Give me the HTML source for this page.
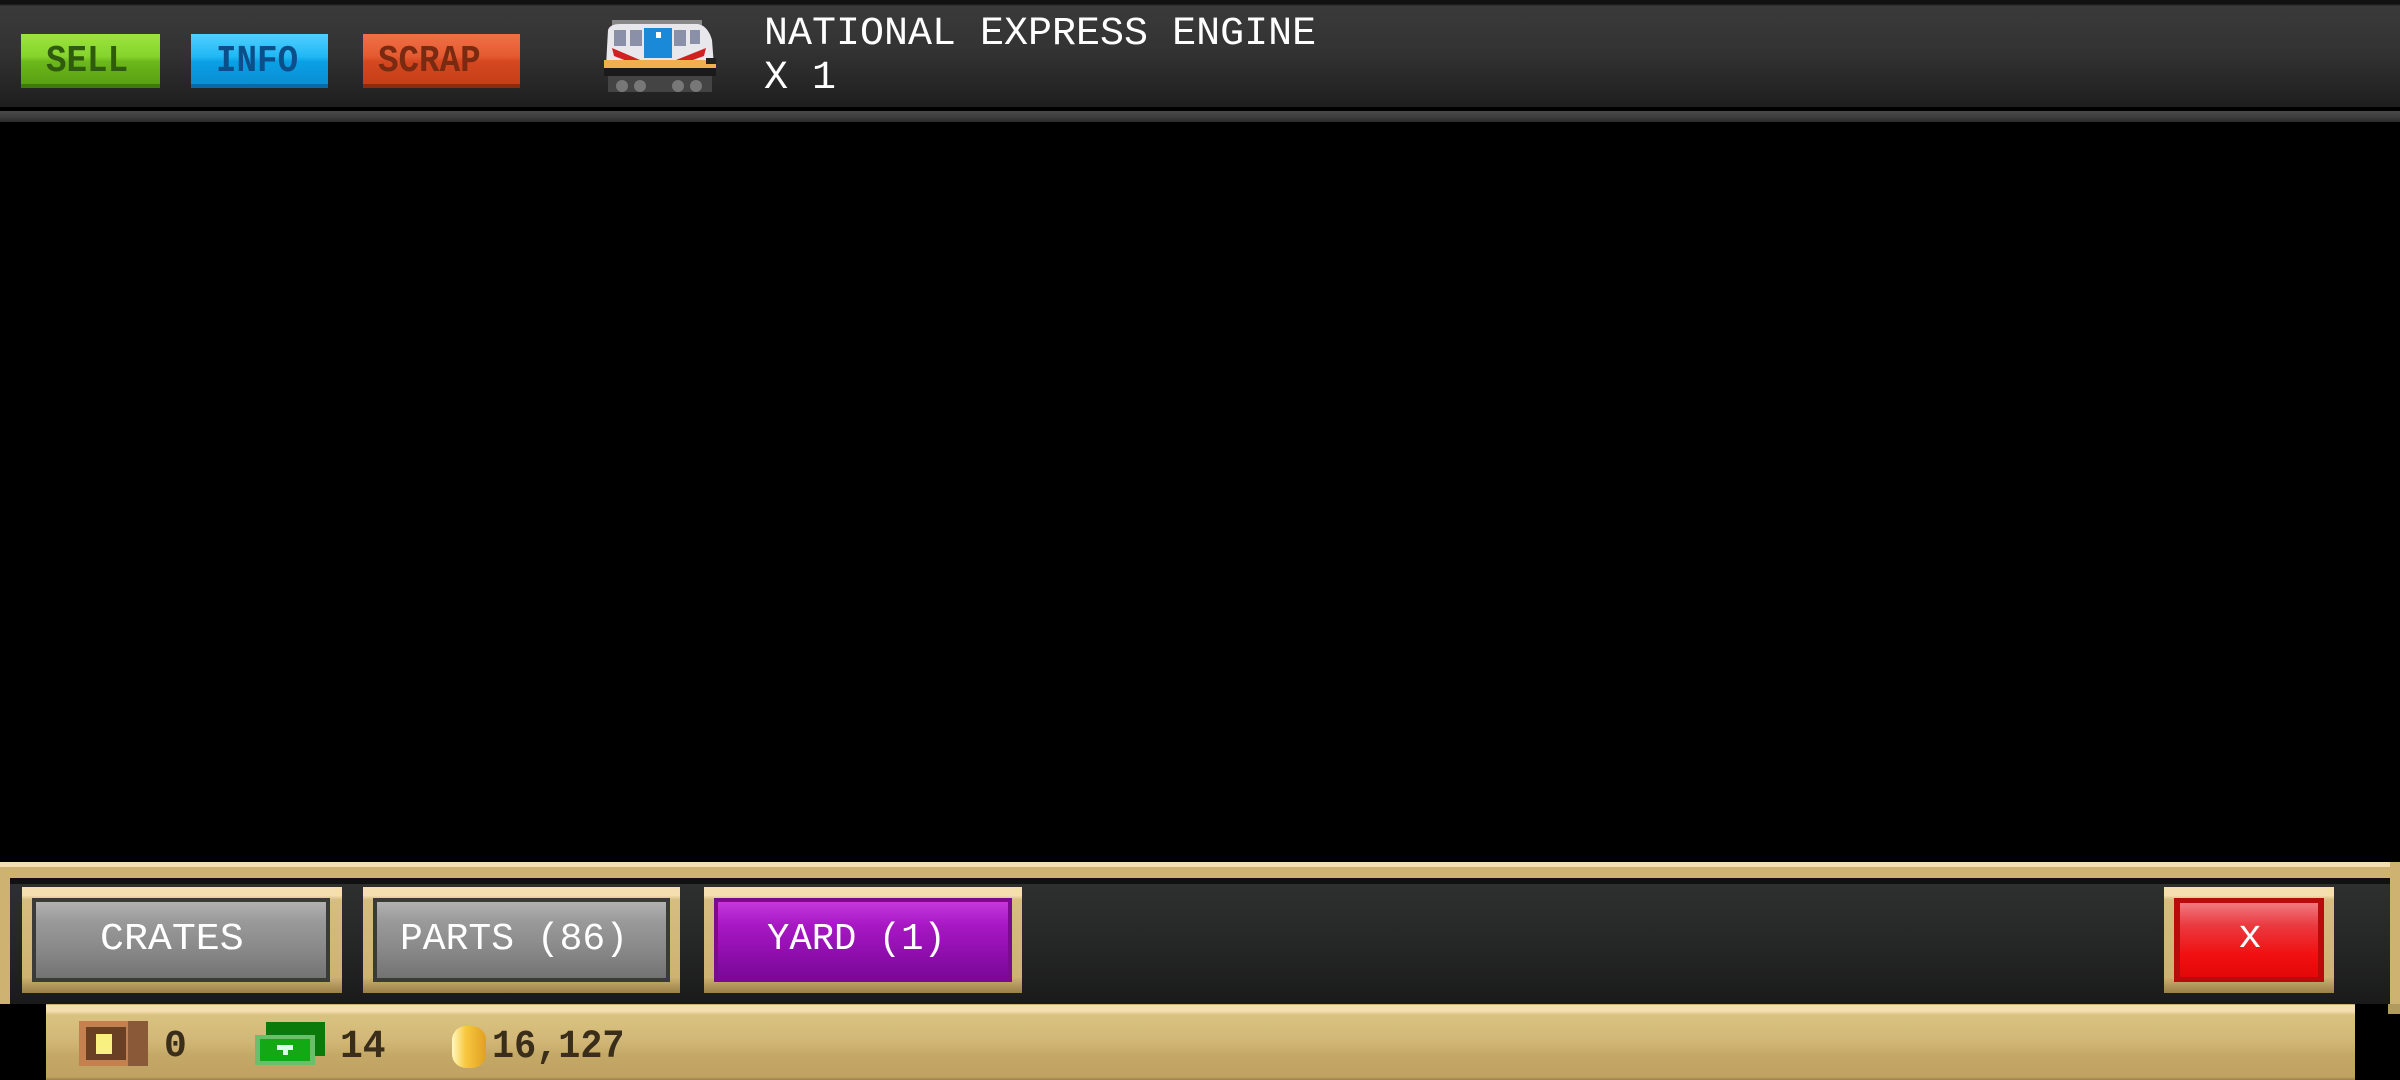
<!DOCTYPE html>
<html><head><meta charset="utf-8"><style>
*{margin:0;padding:0;box-sizing:border-box}
body{width:2400px;height:1080px;background:#000;position:relative;overflow:hidden;font-family:"Liberation Mono",monospace;font-weight:bold}
.a{position:absolute}
.t{position:absolute;white-space:nowrap;transform-origin:0 0}
.n{font-weight:normal}
.gb{position:absolute;background:linear-gradient(#f5deb0 0,#f5deb0 8%,#d6bd80 12%,#cdb272 85%,#9a7f48 100%)}
</style></head><body>
<div class="a" style="left:0;top:0;width:2400px;height:107px;background:linear-gradient(#111 0,#111 4px,#3a3a3a 6px,#333 50px,#1e1e1e 107px)"></div>
<div class="a" style="left:0;top:111px;width:2400px;height:11px;background:linear-gradient(#4a4a4a,#3c3c3c 60%,#2a2a2a)"></div>

<div class="a" style="left:21px;top:34px;width:139px;height:54px;background:linear-gradient(#9be43e 0,#86d42c 45%,#6cb81c 55%,#5aa012 100%);border-bottom:4px solid #3f7a0c"></div>
<div class="t" style="left:46px;top:40px;font-size:38px;color:#2f5c0c;transform:scaleX(0.9)">SELL</div>
<div class="a" style="left:191px;top:34px;width:137px;height:54px;background:linear-gradient(#4fd0ff 0,#21b8f5 45%,#0aa0e6 55%,#0a8fd2 100%);border-bottom:4px solid #0a6aa8"></div>
<div class="t" style="left:216px;top:40px;font-size:38px;color:#0b4f8a;transform:scaleX(0.9)">INFO</div>
<div class="a" style="left:363px;top:34px;width:157px;height:54px;background:linear-gradient(#f07048 0,#e55a30 45%,#d54820 55%,#c53e18 100%);border-bottom:4px solid #8c2a0e"></div>
<div class="t" style="left:378px;top:40px;font-size:38px;color:#7a2a10;transform:scaleX(0.9)">SCRAP</div>

<svg class="a" style="left:600px;top:16px" width="120" height="80" viewBox="0 0 120 80">
<rect x="12" y="4" width="90" height="8" fill="#888"/>
<path d="M8 14 Q10 8 20 8 L98 8 Q108 10 112 24 L114 50 L6 50 Z" fill="#e8e8ec"/>
<rect x="14" y="14" width="12" height="16" fill="#8a90a8"/><rect x="30" y="14" width="12" height="16" fill="#8a90a8"/>
<rect x="74" y="14" width="12" height="16" fill="#8a90a8"/><rect x="90" y="14" width="10" height="14" fill="#8a90a8"/>
<rect x="44" y="12" width="28" height="30" fill="#1a8ad8"/><rect x="56" y="16" width="5" height="6" fill="#fff"/>
<path d="M12 32 L40 44 L76 44 L106 32 L104 40 L76 50 L40 50 L14 40 Z" fill="#d02020"/>
<rect x="4" y="44" width="112" height="10" fill="#f0b050"/>
<rect x="106" y="42" width="10" height="6" fill="#222"/>
<rect x="4" y="52" width="112" height="8" fill="#1a1a1a"/>
<rect x="8" y="60" width="104" height="16" fill="#444"/>
<circle cx="22" cy="70" r="6" fill="#777"/><circle cx="40" cy="70" r="6" fill="#777"/><circle cx="78" cy="70" r="6" fill="#777"/><circle cx="96" cy="70" r="6" fill="#777"/>
</svg>
<div class="t n" style="left:764px;top:12px;font-size:40px;color:#fff">NATIONAL EXPRESS ENGINE</div>
<div class="t n" style="left:764px;top:56px;font-size:40px;color:#fff">X 1</div>

<div class="a" style="left:0;top:862px;width:2400px;height:150px;background:#cdb272"></div>
<div class="a" style="left:0;top:862px;width:2390px;height:5px;background:#f5deb0"></div>
<div class="a" style="left:10px;top:878px;width:2380px;height:126px;background:linear-gradient(#2f3030,#262727 50%,#1a1a1a)"></div>
<div class="a" style="left:10px;top:878px;width:2380px;height:6px;background:#111"></div>
<div class="a" style="left:0;top:1004px;width:46px;height:76px;background:#000"></div>
<div class="a" style="left:2355px;top:1004px;width:45px;height:76px;background:#000"></div>
<div class="a" style="left:2388px;top:1004px;width:12px;height:10px;background:#b09a60"></div>

<div class="gb" style="left:22px;top:887px;width:320px;height:106px"></div>
<div class="a" style="left:32px;top:898px;width:298px;height:84px;background:#3a3a3a"></div>
<div class="a" style="left:36px;top:902px;width:290px;height:76px;background:linear-gradient(#b2b2b2 0,#9a9a9a 25%,#8a8a8a 60%,#737373 100%)"></div>
<div class="t n" style="left:100px;top:918px;font-size:38px;color:#fff;transform:scaleX(1.05)">CRATES</div>

<div class="gb" style="left:363px;top:887px;width:317px;height:106px"></div>
<div class="a" style="left:373px;top:898px;width:297px;height:84px;background:#3a3a3a"></div>
<div class="a" style="left:377px;top:902px;width:289px;height:76px;background:linear-gradient(#b2b2b2 0,#9a9a9a 25%,#8a8a8a 60%,#737373 100%)"></div>
<div class="t n" style="left:400px;top:918px;font-size:38px;color:#fff">PARTS (86)</div>

<div class="gb" style="left:704px;top:887px;width:318px;height:106px"></div>
<div class="a" style="left:714px;top:898px;width:298px;height:84px;background:#7a0a90"></div>
<div class="a" style="left:718px;top:902px;width:290px;height:76px;background:linear-gradient(#c438dc 0,#a818c4 30%,#9410b2 60%,#7a0898 100%)"></div>
<div class="t n" style="left:767px;top:918px;font-size:38px;color:#fff;transform:scaleX(0.98)">YARD (1)</div>

<div class="gb" style="left:2164px;top:887px;width:170px;height:106px"></div>
<div class="a" style="left:2174px;top:898px;width:150px;height:84px;background:#b80c0c"></div>
<div class="a" style="left:2180px;top:903px;width:138px;height:74px;background:linear-gradient(#f07a80 0,#ea3a40 30%,#f01010 70%,#e40808 100%)"></div>
<div class="t n" style="left:2238px;top:915px;font-size:40px;color:#fff">x</div>

<div class="a" style="left:46px;top:1005px;width:2309px;height:75px;background:linear-gradient(#f5deb0 0,#f5deb0 6px,#d9c280 10px,#d2b878 35px,#c4a866 50px,#bfa262 72px,#9a7f48 75px)"></div>
<div class="a" style="left:79px;top:1021px;width:69px;height:45px;background:#c58050"></div>
<div class="a" style="left:86px;top:1027px;width:40px;height:33px;background:#6a4024"></div>
<div class="a" style="left:96px;top:1034px;width:16px;height:20px;background:#f8f080"></div>
<div class="a" style="left:128px;top:1021px;width:20px;height:45px;background:#8a5a38"></div>
<div class="t" style="left:164px;top:1025px;font-size:38px;color:#3a2e1a">0</div>
<div class="a" style="left:266px;top:1022px;width:59px;height:34px;background:#0a7a0a"></div>
<div class="a" style="left:255px;top:1035px;width:60px;height:30px;background:#6ac06a"></div>
<div class="a" style="left:260px;top:1039px;width:50px;height:22px;background:#14a814"></div>
<div class="a" style="left:277px;top:1045px;width:16px;height:5px;background:#dfe"></div>
<div class="a" style="left:283px;top:1045px;width:5px;height:10px;background:#dfe"></div>
<div class="t" style="left:340px;top:1025px;font-size:40px;color:#3a2e1a;transform:scaleX(0.95)">14</div>
<div class="a" style="left:452px;top:1026px;width:34px;height:42px;border-radius:14px;background:linear-gradient(90deg,#fff8c0,#f8c840 40%,#e0a020)"></div>
<div class="t" style="left:492px;top:1025px;font-size:40px;color:#3a2e1a;transform:scaleX(0.92)">16,127</div>
</body></html>
